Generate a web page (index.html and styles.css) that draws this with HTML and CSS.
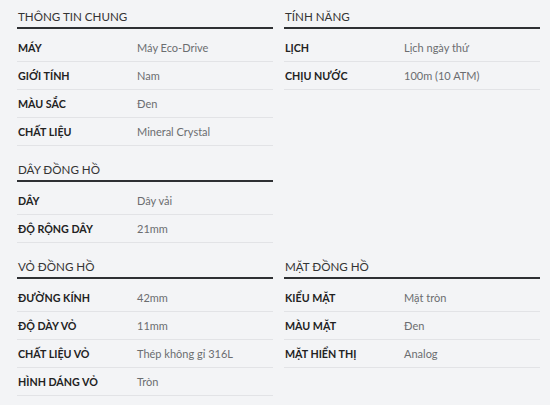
FILE: index.html
```html
<!DOCTYPE html>
<html lang="vi">
<head>
<meta charset="utf-8">
<link rel="stylesheet" href="styles.css">
</head>
<body>
<div class="specs">
  <section class="group g-general">
    <h3 class="group-title">THÔNG TIN CHUNG</h3>
    <div class="row"><span class="label">MÁY</span><span class="value">Máy Eco-Drive</span></div>
    <div class="row"><span class="label">GIỚI TÍNH</span><span class="value">Nam</span></div>
    <div class="row"><span class="label">MÀU SẮC</span><span class="value">Đen</span></div>
    <div class="row"><span class="label">CHẤT LIỆU</span><span class="value">Mineral Crystal</span></div>
  </section>
  <section class="group g-feature">
    <h3 class="group-title">TÍNH NĂNG</h3>
    <div class="row"><span class="label">LỊCH</span><span class="value">Lịch ngày thứ</span></div>
    <div class="row"><span class="label">CHỊU NƯỚC</span><span class="value">100m (10 ATM)</span></div>
  </section>
  <section class="group g-strap">
    <h3 class="group-title">DÂY ĐỒNG HỒ</h3>
    <div class="row"><span class="label">DÂY</span><span class="value">Dây vải</span></div>
    <div class="row"><span class="label">ĐỘ RỘNG DÂY</span><span class="value">21mm</span></div>
  </section>
  <section class="group g-case">
    <h3 class="group-title">VỎ ĐỒNG HỒ</h3>
    <div class="row"><span class="label">ĐƯỜNG KÍNH</span><span class="value">42mm</span></div>
    <div class="row"><span class="label">ĐỘ DÀY VỎ</span><span class="value">11mm</span></div>
    <div class="row"><span class="label">CHẤT LIỆU VỎ</span><span class="value">Thép không gỉ 316L</span></div>
    <div class="row"><span class="label">HÌNH DÁNG VỎ</span><span class="value">Tròn</span></div>
  </section>
  <section class="group g-dial">
    <h3 class="group-title">MẶT ĐỒNG HỒ</h3>
    <div class="row"><span class="label">KIỂU MẶT</span><span class="value">Mặt tròn</span></div>
    <div class="row"><span class="label">MÀU MẶT</span><span class="value">Đen</span></div>
    <div class="row"><span class="label">MẶT HIỂN THỊ</span><span class="value">Analog</span></div>
  </section>
</div>
</body>
</html>
```
FILE: styles.css
```css
html, body {
  margin: 0;
  padding: 0;
  background: #f3f4f6;
}
body {
  font-family: Lato, "Noto Sans", sans-serif;
  width: 550px;
  height: 405px;
  overflow: hidden;
}
.specs {
  display: grid;
  grid-template-columns: 256px 256px;
  column-gap: 11px;
  row-gap: 16px;
  align-items: start;
  padding: 9px 0 0 17px;
}
.g-general { grid-column: 1; grid-row: 1; }
.g-feature { grid-column: 2; grid-row: 1; }
.g-strap { grid-column: 1; grid-row: 2; }
.g-case { grid-column: 1; grid-row: 3; }
.g-dial { grid-column: 2; grid-row: 3; }
.group-title {
  margin: 0 0 5px;
  padding: 0 0 2px 1px;
  font-size: 11.6px;
  line-height: 16px;
  font-weight: 400;
  color: #333;
  border-bottom: 2px solid #2e3033;
}
.row {
  display: flex;
  align-items: center;
  height: 27px;
  border-bottom: 1px solid #e2e3e6;
  font-size: 11px;
}
.label {
  width: 120px;
  flex: none;
  padding-left: 1px;
  box-sizing: border-box;
  font-size: 10.7px;
  font-weight: 700;
  color: #222;
}
.value {
  color: #6b6d70;
}
```
